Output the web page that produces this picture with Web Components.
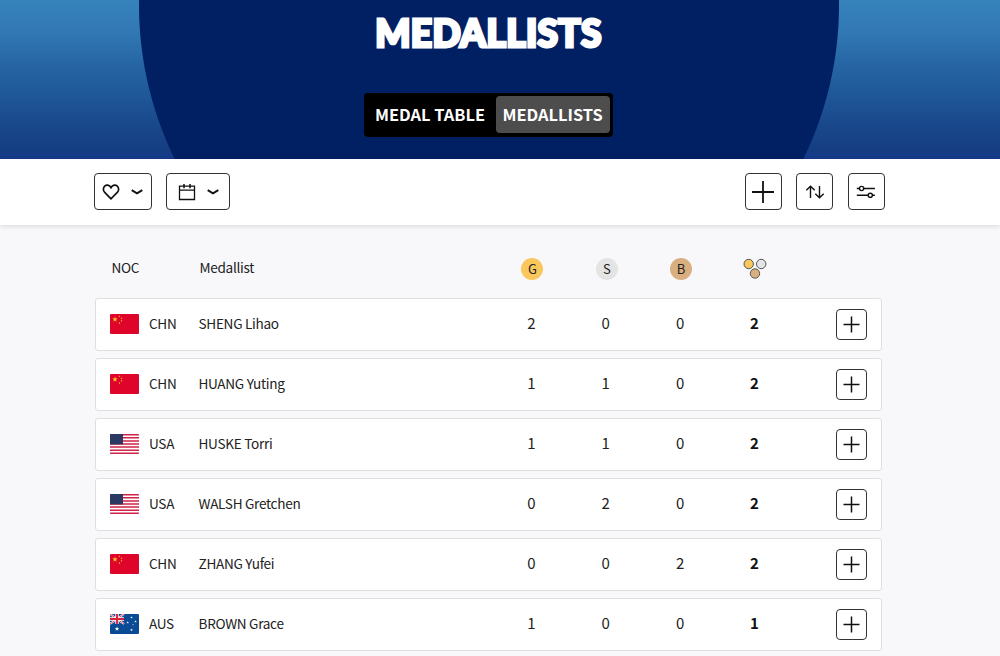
<!DOCTYPE html>
<html lang="en">
<head>
<meta charset="utf-8">
<title>Medallists</title>
<style>
  body {
    background-color: #f8f8fb;
    color: #222;
    font-family: "Noto Sans CJK SC", "Noto Sans", sans-serif;
    margin: 0;
    overflow: hidden;
  }
</style>
</head>
<body>

<page-hero>
  <hero-title>MEDALLISTS</hero-title>
  <tab-switch>
    <tab-item>MEDAL TABLE</tab-item>
    <tab-item active>MEDALLISTS</tab-item>
  </tab-switch>
</page-hero>

<filter-bar></filter-bar>

<medal-table></medal-table>

<script>
// hero

class PageHero extends HTMLElement {
  constructor(){
    super();
    const shadowRoot = this.attachShadow({mode: 'open'});
    shadowRoot.innerHTML = `
    <style>
      :host {
        align-items: center;
        background:
          radial-gradient(circle 352px at 489px 5px, #002063 349.5px, transparent 350.5px),
          linear-gradient(#3683bc 0, #3279b5 30px, #2767a6 62px, #1f5798 95px, #184689 130px, #153e82 150px, #153a8c 158px);
        box-sizing: border-box;
        display: flex;
        flex-direction: column;
        height: 159px;
        padding: 8px 23px 0 0;
      }
    </style>
    <slot></slot>
    `;
  }
}
customElements.define('page-hero', PageHero);


class HeroTitle extends HTMLElement {
  constructor(){
    super();
    const shadowRoot = this.attachShadow({mode: 'open'});
    shadowRoot.innerHTML = `
    <style>
      :host {
        display: block;
        height: 85px;
      }

      h1 {
        -webkit-text-stroke: 3px white;
        color: white;
        font-family: Lato, "Liberation Sans", sans-serif;
        font-size: 37px;
        font-weight: 900;
        letter-spacing: 0.4px;
        line-height: 49px;
        margin: 0;
        stroke-linejoin: round;
        white-space: nowrap;
      }
    </style>
    <h1><slot></slot></h1>
    `;
  }
}
customElements.define('hero-title', HeroTitle);


class TabSwitch extends HTMLElement {
  constructor(){
    super();
    const shadowRoot = this.attachShadow({mode: 'open'});
    shadowRoot.innerHTML = `
    <style>
      :host {
        background-color: black;
        border-radius: 4px;
        box-sizing: border-box;
        display: flex;
        height: 44px;
        padding: 3px 3px 3px 4px;
        width: 249px;
      }
    </style>
    <slot></slot>
    `;
  }
}
customElements.define('tab-switch', TabSwitch);


class TabItem extends HTMLElement {
  constructor(){
    super();
    const shadowRoot = this.attachShadow({mode: 'open'});
    shadowRoot.innerHTML = `
    <style>
      :host {
        border-radius: 4px;
        box-sizing: border-box;
        color: white;
        display: block;
        flex: 0 0 127.5px;
        font-size: 16.4px;
        font-weight: 700;
        height: 37px;
        line-height: 37px;
        padding-left: 7px;
        white-space: nowrap;
      }

      :host([active]) {
        background-color: #4d4d4d;
        flex: 1;
      }
    </style>
    <slot></slot>
    `;
  }
}
customElements.define('tab-item', TabItem);


// icons, all strokes take the current colour

const ICONS = {
  heart: '<svg width="18" height="18" viewBox="0 0 18 18" stroke-width="1.7"><path d="M9 15.8 2.7 9.4C.9 7.5 1 4.7 2.7 3.1c1.8-1.6 4.5-1.2 5.7.7L9 4.7l.6-.9c1.2-1.9 3.9-2.3 5.7-.7C17 4.7 17.1 7.5 15.3 9.4z"/></svg>',
  calendar: '<svg width="18" height="18" viewBox="0 0 18 18" stroke-width="1.3"><path d="M1.5 3.2h15v13.3h-15zM1.5 7.2h15"/><path d="M6 1v4.2M12 1v4.2" stroke-width="1.5"/></svg>',
  chevron: '<svg width="12" height="6" viewBox="0 0 12 6" stroke-width="1.9"><path d="M.7 1.1 6 4.3 11.3 1.1"/></svg>',
  plus: '<svg width="22" height="22" viewBox="0 0 22 22" stroke-width="1.8"><path d="M11 0v22M0 11h22"/></svg>',
  smallPlus: '<svg width="17" height="17" viewBox="0 0 17 17" stroke-width="1.5"><path d="M8.5 .5v16M.5 8.5h16"/></svg>',
  sort: '<svg width="20" height="16" viewBox="0 0 20 16" stroke-width="1.4"><path d="M5.5 14V2.2M1.3 6.3 5.5 2.2 9.7 6.3M14.5 2v11.8M10.3 9.7 14.5 13.8 18.7 9.7"/></svg>',
  sliders: '<svg width="20" height="16" viewBox="0 0 20 16" stroke-width="1.4"><path d="M.8 4.5h2.7M7.7 4.5h11.2M.8 11.3h11.4M16.4 11.3h2.5"/><circle cx="5.6" cy="4.5" r="2.1"/><circle cx="14.3" cy="11.3" r="2.1"/></svg>'
};

class IconButton extends HTMLElement {
  constructor(){
    super();
    const shadowRoot = this.attachShadow({mode: 'open'});
    const icons = this.getAttribute('icons').split(' ').map(name => ICONS[name]).join('');
    shadowRoot.innerHTML = `
    <style>
      :host {
        display: block;
        height: 37px;
        width: 37px;
      }

      :host([small]) {
        height: 31px;
        width: 31px;
      }

      :host([wide]) {
        width: var(--button-width, 58px);
      }

      button {
        align-items: center;
        background-color: white;
        border: 1px solid #333;
        border-radius: 4px;
        color: #111;
        display: flex;
        gap: 11px;
        height: 100%;
        justify-content: center;
        padding: 0;
        width: 100%;
      }

      button:hover {
        background-color: #eee;
        cursor: pointer;
      }

      svg {
        fill: none;
        flex: none;
        stroke: currentColor;
      }
    </style>
    <button>${icons}</button>
    `;
  }
}
customElements.define('icon-button', IconButton);


class FilterBar extends HTMLElement {
  constructor(){
    super();
    const shadowRoot = this.attachShadow({mode: 'open'});
    shadowRoot.innerHTML = `
    <style>
      :host {
        background-color: white;
        box-shadow: 0 1px 5px rgb(0,0,0,0.14);
        box-sizing: border-box;
        display: flex;
        gap: 14.5px;
        height: 66px;
        padding: 14px 115.5px 0 93.5px;
      }

      .right {
        display: flex;
        gap: 14.5px;
        margin-left: auto;
      }
    </style>
    <icon-button wide icons="heart chevron"></icon-button>
    <icon-button wide icons="calendar chevron" style="--button-width: 64px"></icon-button>
    <div class="right">
      <icon-button icons="plus"></icon-button>
      <icon-button icons="sort"></icon-button>
      <icon-button icons="sliders"></icon-button>
    </div>
    `;
  }
}
customElements.define('filter-bar', FilterBar);


// flags

const STAR = '0,-1 .225,-.309 .951,-.309 .363,.118 .588,.809 0,.382 -.588,.809 -.363,.118 -.951,-.309 -.225,-.309';

function star(x, y, size, color, angle = 0){
  return `<polygon points="${STAR}" fill="${color}" transform="translate(${x} ${y}) rotate(${angle}) scale(${size})"/>`;
}

const FLAGS = {
  CHN: `<rect width="29" height="20" fill="#df0429"/>`
    + star(5, 5.5, 2.9, '#ffc928')
    + star(9.5, 2.3, 1.1, '#ffc928', 20) + star(11.5, 4.3, 1.1, '#ffc928', 45)
    + star(11.5, 6.9, 1.1, '#ffc928') + star(9.5, 9, 1.1, '#ffc928', 20),
  USA: `<rect width="29" height="20" fill="#fff"/>
    <path d="M0 .77h29M0 3.85h29M0 6.92h29M0 10h29M0 13.08h29M0 16.15h29M0 19.23h29" stroke="#d02348" stroke-width="1.54"/>
    <rect width="13" height="10.4" fill="#2c3a63"/>`,
  AUS: `<rect width="29" height="20" fill="#0b4a94"/>
    <path d="M0 0 14 10M14 0 0 10" stroke="#fff" stroke-width="2"/>
    <path d="M0 0 14 10M14 0 0 10" stroke="#d8213f" stroke-width=".8"/>
    <path d="M7 0v10M0 5h14" stroke="#fff" stroke-width="3.4"/>
    <path d="M7 0v10M0 5h14" stroke="#d8213f" stroke-width="1.9"/>`
    + star(7, 14.8, 2.4, '#fff') + star(21.5, 3.5, 1.3, '#fff')
    + star(17.7, 8.5, 1.3, '#fff') + star(25.5, 7.5, 1.3, '#fff')
    + star(23, 10.8, .8, '#fff') + star(21.5, 16, 1.5, '#fff')
};

class CountryFlag extends HTMLElement {
  constructor(){
    super();
    const shadowRoot = this.attachShadow({mode: 'open'});
    shadowRoot.innerHTML = `
    <style>
      :host {
        border-radius: 1px;
        display: block;
        height: 20px;
        overflow: hidden;
        width: 29px;
      }

      svg {
        display: block;
      }
    </style>
    <svg width="29" height="20" viewBox="0 0 29 20">${FLAGS[this.getAttribute('code')]}</svg>
    `;
  }
}
customElements.define('country-flag', CountryFlag);


// table

class MedalBadge extends HTMLElement {
  constructor(){
    super();
    const shadowRoot = this.attachShadow({mode: 'open'});
    shadowRoot.innerHTML = `
    <style>
      :host {
        background-color: var(--medal);
        border-radius: 50%;
        display: block;
        font-size: 13px;
        height: 22px;
        letter-spacing: 0;
        line-height: 22px;
        text-align: center;
        width: 22px;
      }
    </style>
    <slot></slot>
    `;
  }
}
customElements.define('medal-badge', MedalBadge);


class AthleteRow extends HTMLElement {
  constructor(){
    super();
    const shadowRoot = this.attachShadow({mode: 'open'});
    const code = this.getAttribute('noc');
    const medals = this.getAttribute('medals').split(',');
    shadowRoot.innerHTML = `
    <style>
      :host {
        align-items: center;
        background-color: white;
        border: 1px solid #dfdfe2;
        border-radius: 3px;
        box-sizing: border-box;
        display: grid;
        font-size: 13.6px;
        grid-template-columns: 39px 49.5px 1fr repeat(4, 74.3px) 75.5px;
        height: 53px;
        letter-spacing: -0.3px;
        line-height: 20px;
        padding: 0 14px;
      }

      country-flag {
        margin-bottom: 2px;
      }

      span {
        margin-bottom: 4px;
      }

      .medal {
        font-size: 15px;
        letter-spacing: 0;
        margin-bottom: 3px;
        text-align: center;
      }

      .total {
        color: #111;
        font-weight: 700;
      }

      icon-button {
        justify-self: end;
      }
    </style>
    <country-flag code="${code}"></country-flag>
    <span>${code}</span>
    <span><slot></slot></span>
    <span class="medal">${medals[0]}</span>
    <span class="medal">${medals[1]}</span>
    <span class="medal">${medals[2]}</span>
    <span class="medal total">${medals[3]}</span>
    <icon-button small icons="smallPlus"></icon-button>
    `;
  }
}
customElements.define('athlete-row', AthleteRow);


class MedalTable extends HTMLElement {
  constructor(){
    super();
    const shadowRoot = this.attachShadow({mode: 'open'});
    shadowRoot.innerHTML = `
    <style>
      :host {
        display: block;
        margin-left: 95px;
        width: 787px;
      }

      .head {
        align-items: center;
        box-sizing: border-box;
        display: grid;
        font-size: 13.6px;
        grid-template-columns: 88px 1fr repeat(4, 74.3px) 75.5px;
        height: 73px;
        letter-spacing: -0.3px;
        line-height: 20px;
        padding: 14px 14px 0 16.5px;
      }

      .head > span {
        margin-bottom: 3px;
      }

      .head > medal-badge, .head > svg {
        justify-self: center;
      }

      .rows {
        display: flex;
        flex-direction: column;
        gap: 7px;
      }
    </style>
    <div class="head">
      <span>NOC</span>
      <span>Medallist</span>
      <medal-badge style="--medal: #fac75c">G</medal-badge>
      <medal-badge style="--medal: #e4e4e4">S</medal-badge>
      <medal-badge style="--medal: #daaf80">B</medal-badge>
      <svg width="24" height="22" viewBox="0 0 24 22" stroke="#555" stroke-width="1">
        <circle cx="5.7" cy="6" r="4.7" fill="#fac75c"/>
        <circle cx="18.2" cy="6" r="4.7" fill="#e4e4e8"/>
        <circle cx="12" cy="15.5" r="4.7" fill="#daaf80"/>
      </svg>
    </div>
    <div class="rows">
      <athlete-row noc="CHN" medals="2,0,0,2">SHENG Lihao</athlete-row>
      <athlete-row noc="CHN" medals="1,1,0,2">HUANG Yuting</athlete-row>
      <athlete-row noc="USA" medals="1,1,0,2">HUSKE Torri</athlete-row>
      <athlete-row noc="USA" medals="0,2,0,2">WALSH Gretchen</athlete-row>
      <athlete-row noc="CHN" medals="0,0,2,2">ZHANG Yufei</athlete-row>
      <athlete-row noc="AUS" medals="1,0,0,1">BROWN Grace</athlete-row>
    </div>
    `;
  }
}
customElements.define('medal-table', MedalTable);
</script>
</body>
</html>
